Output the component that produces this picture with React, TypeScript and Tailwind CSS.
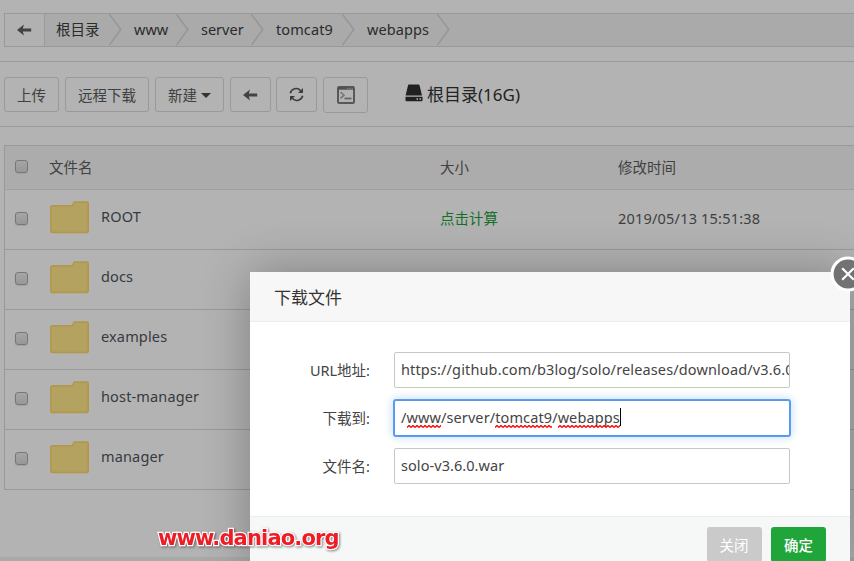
import type { ReactNode } from "react";

const LINE = "border-[#999]";

const crumbs = [
  { name: "根目录", box: "w-[77px]", text: "-ml-px" },
  { name: "www", box: "w-[67px]", text: "" },
  { name: "server", box: "w-[75px]", text: "" },
  { name: "tomcat9", box: "w-[91px]", text: "tracking-[0.1px]" },
  { name: "webapps", box: "w-[95px]", text: "tracking-[0.1px]" },
];

const files = [
  { name: "ROOT", size: "点击计算", time: "2019/05/13 15:51:38" },
  { name: "docs", size: "", time: "" },
  { name: "examples", size: "", time: "" },
  { name: "host-manager", size: "", time: "" },
  { name: "manager", size: "", time: "" },
];

function ArrowLeft() {
  return (
    <svg width="15" height="12" viewBox="0 0 15 12" className="block">
      <path d="M0 6L7 .5L5.8 4.4H14.2V7.6H5.8L7 11.5Z" fill="#424242" />
    </svg>
  );
}

function Chevron() {
  return (
    <svg width="13" height="32" viewBox="0 0 13 32" className="block shrink-0">
      <path d="M.5 .5L11.8 15.5L.5 31" fill="none" stroke="#969696" strokeWidth="1.5" />
    </svg>
  );
}

function RefreshIcon() {
  return (
    <svg width="15" height="15" viewBox="0 0 15 15" className="block" fill="none" stroke="#3d3d3d" strokeWidth="1.6">
      <path d="M1.3 6.2A6 6 0 0 1 11.7 3.7M13.7 8.8A6 6 0 0 1 3.3 11.3" />
      <path d="M14 1V6H9ZM1 14V9H6Z" fill="#3d3d3d" stroke="none" />
    </svg>
  );
}

function TerminalIcon() {
  return (
    <svg width="18" height="18" viewBox="0 0 18 18" className="block" fill="none">
      <rect x="1" y="1" width="16" height="16" rx="1.2" stroke="#585858" strokeWidth="2" />
      <path d="M1 2.2H17" stroke="#505050" strokeWidth="3" />
      <path d="M10 2.3H11.3M12.3 2.3H13.6M14.6 2.3H15.9" stroke="#8f8f8f" strokeWidth="1" />
      <path d="M3.5 6L7 9.2L3.5 12.4" stroke="#777" strokeWidth="1.6" />
      <path d="M7.5 12.5H14.5" stroke="#606060" strokeWidth="1.6" />
    </svg>
  );
}

function DiskIcon() {
  return (
    <svg width="18" height="18" viewBox="0 0 18 18" className="block" fill="#202020">
      <path d="M4 .5H13.5Q14.4 .5 14.6 1.4L17 11.5H.6L3 1.4Q3.2 .5 4 .5Z" />
      <path fillRule="evenodd" d="M.5 12.8H17.5V16.2Q17.5 17.2 16.5 17.2H1.5Q.5 17.2 .5 16.2ZM11.5 14.3V15.8H13V14.3ZM14.5 14.3V15.8H16V14.3Z" />
    </svg>
  );
}

function FolderIcon() {
  return (
    <svg width="40" height="33" viewBox="0 0 40 33" className="block">
      <path
        d="M2.5 4.8H21.3Q22.3 4.8 22.8 3.7L23.6 2Q24 1 25 1H36.8Q38.3 1 38.3 2.5V30Q38.3 31.5 36.8 31.5H2.3Q.8 31.5 .8 30V6.3Q.8 4.8 2.5 4.8Z"
        fill="#b3a260"
        stroke="#b2964a"
        strokeWidth="1.4"
      />
      <path d="M36.6 2.5V29.8H2.5" fill="none" stroke="#b79d50" strokeWidth=".7" strokeDasharray="1 1" />
    </svg>
  );
}

function Check() {
  return (
    <span className="block size-[13px] rounded-[3px] border border-[#777] bg-linear-to-b from-[#a5a5a5] to-[#989898] shadow-[0_1px_1px_#a0a0a0]" />
  );
}

function ToolButton({ className, children }: { className: string; children: ReactNode }) {
  return (
    <button className={`flex shrink-0 items-center justify-center rounded-[3px] border text-[14.5px] text-[#404040] ${LINE} ${className}`}>
      {children}
    </button>
  );
}

function Misspelt({ children }: { children: ReactNode }) {
  return (
    <span className="relative inline-block">
      {children}
      <svg className="absolute -bottom-px left-0 h-[3px] w-full">
        <defs>
          <pattern id="wave" width="4" height="3" patternUnits="userSpaceOnUse">
            <path d="M0 2.5L2 .5L4 2.5" fill="none" stroke="#f00" strokeWidth="1.3" />
          </pattern>
        </defs>
        <rect width="100%" height="3" fill="url(#wave)" />
      </svg>
    </span>
  );
}

function Field({ label, focused, children }: { label: string; focused?: boolean; children: ReactNode }) {
  return (
    <div className="flex h-9 items-center">
      <div className="w-[120px] pb-px text-right leading-5">{label}</div>
      <div
        className={`ml-6 flex h-9 w-[396px] items-center overflow-hidden rounded-[2px] border bg-white pb-0.5 pl-1.5 whitespace-nowrap ${
          focused
            ? "border-[#5897f0] shadow-[0_0_0_1px_#5c9cf5,0_0_9px_2px_#c9e2f3]"
            : "border-[#c8c8c8]"
        }`}
      >
        {children}
      </div>
    </div>
  );
}

function Dialog() {
  return (
    <div className="absolute top-[272px] left-[250px] h-[300px] w-[600px] rounded-t-[2px] bg-white text-[#444] shadow-[1px_1px_50px_rgba(0,0,0,0.3)]">
      <div className="flex h-[50px] items-center border-b border-[#ececec] bg-[#f7f7f7] pt-0.5 pl-6 text-[17px] text-[#333]">
        下载文件
      </div>
      <div className="flex h-[194px] flex-col gap-3 pt-[30px]">
        <Field label="URL地址:">
          <span className="tracking-[0.14px]">https://github.com/b3log/solo/releases/download/v3.6.0</span>
        </Field>
        <Field label="下载到:" focused>
          <span className="flex tracking-[0.1px]">
            /<Misspelt>www</Misspelt>/server/<Misspelt>tomcat9</Misspelt>/<Misspelt>webapps</Misspelt>
          </span>
          <span className="h-[18px] w-px bg-black" />
        </Field>
        <Field label="文件名:">
          <span className="tracking-[0.06px]">solo-v3.6.0.war</span>
        </Field>
      </div>
      <div className="flex h-[56px] justify-end gap-[9px] border-t border-[#e8eeee] bg-[#f5f8f7] pt-[10px] pr-6 text-[14.5px] text-white">
        <button className="h-[35px] w-[55px] rounded-[3px] bg-[#cacaca] pr-px">关闭</button>
        <button className="h-[35px] w-[55px] rounded-[3px] bg-[#20a53a] font-medium">确定</button>
      </div>
      <svg width="36" height="36" viewBox="0 0 36 36" className="absolute -top-4 left-[580px]">
        <circle cx="18" cy="18" r="16" fill="#727272" stroke="#fff" strokeWidth="3.2" />
        <path d="M12.2 12.2L23.8 23.8M23.8 12.2L12.2 23.8" stroke="#fff" strokeWidth="2.2" />
      </svg>
    </div>
  );
}

export default function App() {
  return (
    <div className="relative flex h-[561px] w-[854px] flex-col overflow-hidden bg-[#b3b3b3] font-['Noto_Sans','Noto_Sans_CJK_SC',sans-serif] text-[14.5px] leading-5 text-[#404040]">
      <div className={`mt-[13px] ml-1 flex h-[34px] shrink-0 border-y border-l bg-[#aaa] text-[#2b2b2b] ${LINE}`}>
        <div className={`flex w-10 items-center justify-center border-r bg-[#b1b1b1] ${LINE}`}>
          <ArrowLeft />
        </div>
        {crumbs.map((c) => (
          <div key={c.name} className={`flex shrink-0 items-center justify-between pl-3 ${c.box}`}>
            <span className={`pb-0.5 ${c.text}`}>{c.name}</span>
            <Chevron />
          </div>
        ))}
      </div>

      <div className={`mt-[14px] flex h-[66px] shrink-0 border-y pt-[15px] pl-1 ${LINE}`}>
        <ToolButton className="h-[35px] w-[55px]">上传</ToolButton>
        <ToolButton className="ml-1.5 h-[35px] w-[84px]">远程下载</ToolButton>
        <ToolButton className="ml-1.5 h-[35px] w-[69px]">
          新建
          <span className="mt-0.5 ml-1 border-x-[5px] border-t-[5px] border-x-transparent border-t-[#333]" />
        </ToolButton>
        <ToolButton className="ml-1.5 h-[35px] w-[41px]"><ArrowLeft /></ToolButton>
        <ToolButton className="ml-[5px] h-[35px] w-[41px]"><RefreshIcon /></ToolButton>
        <ToolButton className="ml-1.5 h-9 w-[45px]"><TerminalIcon /></ToolButton>
        <div className="ml-[37px] flex h-[35px] items-center gap-1 text-[17px] text-[#222]">
          <div className="-mt-1"><DiskIcon /></div>
          根目录(16G)
        </div>
      </div>

      <div className={`mt-[18px] ml-1 shrink-0 border-t border-l ${LINE}`}>
        <div className="flex h-11 items-center border-b border-[#a0a0a0] bg-[#acacac] pb-0.5">
          <div className="w-11 pl-[10px]"><Check /></div>
          <div className="w-[391px]">文件名</div>
          <div className="w-[178px]">大小</div>
          <div>修改时间</div>
        </div>
        {files.map((f) => (
          <div key={f.name} className={`flex h-[60px] items-center border-b pb-0.5 ${LINE}`}>
            <div className="w-[45px] pl-[10px]"><Check /></div>
            <div className="flex w-[390px] items-center gap-[11px] pb-0.5">
              <FolderIcon />
              <span className="pb-1 tracking-[0.15px] text-[#363a40]">{f.name}</span>
            </div>
            <div className="w-[178px] pb-px text-[#147029]">{f.size}</div>
            <div className="pb-px tracking-[0.2px]">{f.time}</div>
          </div>
        ))}
      </div>
      <div className="mt-auto h-1 shrink-0 bg-[#a9a9a9]" />

      <Dialog />

      <div
        className="absolute top-[524px] left-[158px] font-['DejaVu_Sans',sans-serif] text-[21px] leading-7 font-bold tracking-[-0.85px] text-[#ee1c25] [paint-order:stroke_fill] [-webkit-text-stroke:2.5px_white] [filter:drop-shadow(1px_1px_1px_rgba(0,0,0,0.45))]"
      >
        www.daniao.org
      </div>
    </div>
  );
}
